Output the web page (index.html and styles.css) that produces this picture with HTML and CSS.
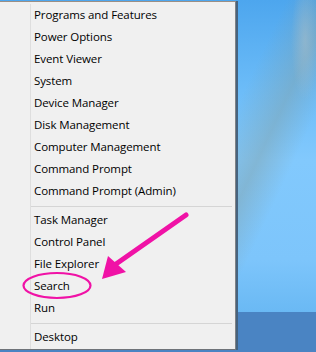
FILE: index.html
```html
<!DOCTYPE html>
<html lang="en">
<head>
  <meta charset="UTF-8">
  <meta name="viewport" content="width=device-width, initial-scale=1">
  <title>Quick Link Menu</title>
  <link rel="stylesheet" href="styles.css">
</head>
<body>
  <div class="desktop">
    <div class="wallpaper"></div>
    <div class="taskbar"></div>

    <!-- Win+X menu -->
    <div class="menu">
      <ul class="menu-list">
        <li>Programs and Features</li>
        <li>Power Options</li>
        <li>Event Viewer</li>
        <li>System</li>
        <li>Device Manager</li>
        <li>Disk Management</li>
        <li>Computer Management</li>
        <li>Command Prompt</li>
        <li>Command Prompt (Admin)</li>
        <li class="separator"></li>
        <li>Task Manager</li>
        <li>Control Panel</li>
        <li>File Explorer</li>
        <li>Search</li>
        <li>Run</li>
        <li class="separator"></li>
        <li>Desktop</li>
      </ul>
    </div>

    <!-- annotation -->
    <svg class="markup" width="316" height="352" viewBox="0 0 316 352">
      <line x1="186" y1="215" x2="116" y2="264" stroke="#f012a6" stroke-width="5" stroke-linecap="round"/>
      <polygon points="102,279 108,256 126,272" fill="#f012a6"/>
      <ellipse cx="57" cy="285.5" rx="33.5" ry="12.5" fill="none" stroke="#f012a6" stroke-width="2.2"/>
    </svg>
  </div>
</body>
</html>
```

FILE: styles.css
```css
* {
  margin: 0;
  padding: 0;
  box-sizing: border-box;
}

body {
  font-family: 'Open Sans', 'Noto Sans', sans-serif;
  background: #5aaef2;
}

/* Desktop */
.desktop {
  position: relative;
  width: 316px;
  height: 352px;
  display: flex;
  flex-direction: column;
  overflow: hidden;
}

.wallpaper {
  flex: 1;
  background:
    radial-gradient(ellipse 14px 60px at 305px 40px, rgba(170, 190, 200, 0.55), transparent),
    linear-gradient(115deg, transparent 62%, rgba(130, 160, 165, 0.45) 72%, transparent 80%),
    linear-gradient(to bottom, #4da6ee 0px, #6cbcf8 90px, #82c9fd 160px, #7dc5fb 260px, #6ab9f4 312px);
}

.taskbar {
  height: 40px;
  background: #4a84c3;
}

/* Menu */
.menu {
  position: absolute;
  left: 0;
  top: 1px;
  width: 236px;
  height: 349px;
  background: #f0f0f0;
  border-top: 1px solid #9a8f86;
  border-right: 1px solid #7e8286;
  border-bottom: 1px solid #6f7378;
  box-shadow: 2px 0 0 #47637e;
  padding: 2px 3px 0 30px;
}

.menu-list {
  list-style: none;
  border-left: 1px solid #dedede;
  height: 100%;
}

.menu-list li {
  height: 22px;
  line-height: 22px;
  padding-left: 3px;
  font-size: 11.5px;
  letter-spacing: -0.1px;
  color: #000;
  white-space: nowrap;
}

.menu-list li.separator {
  height: 1px;
  margin: 4px 0 2px;
  background: #d5d5d5;
}

.markup {
  position: absolute;
  left: 0;
  top: 0;
}
```
